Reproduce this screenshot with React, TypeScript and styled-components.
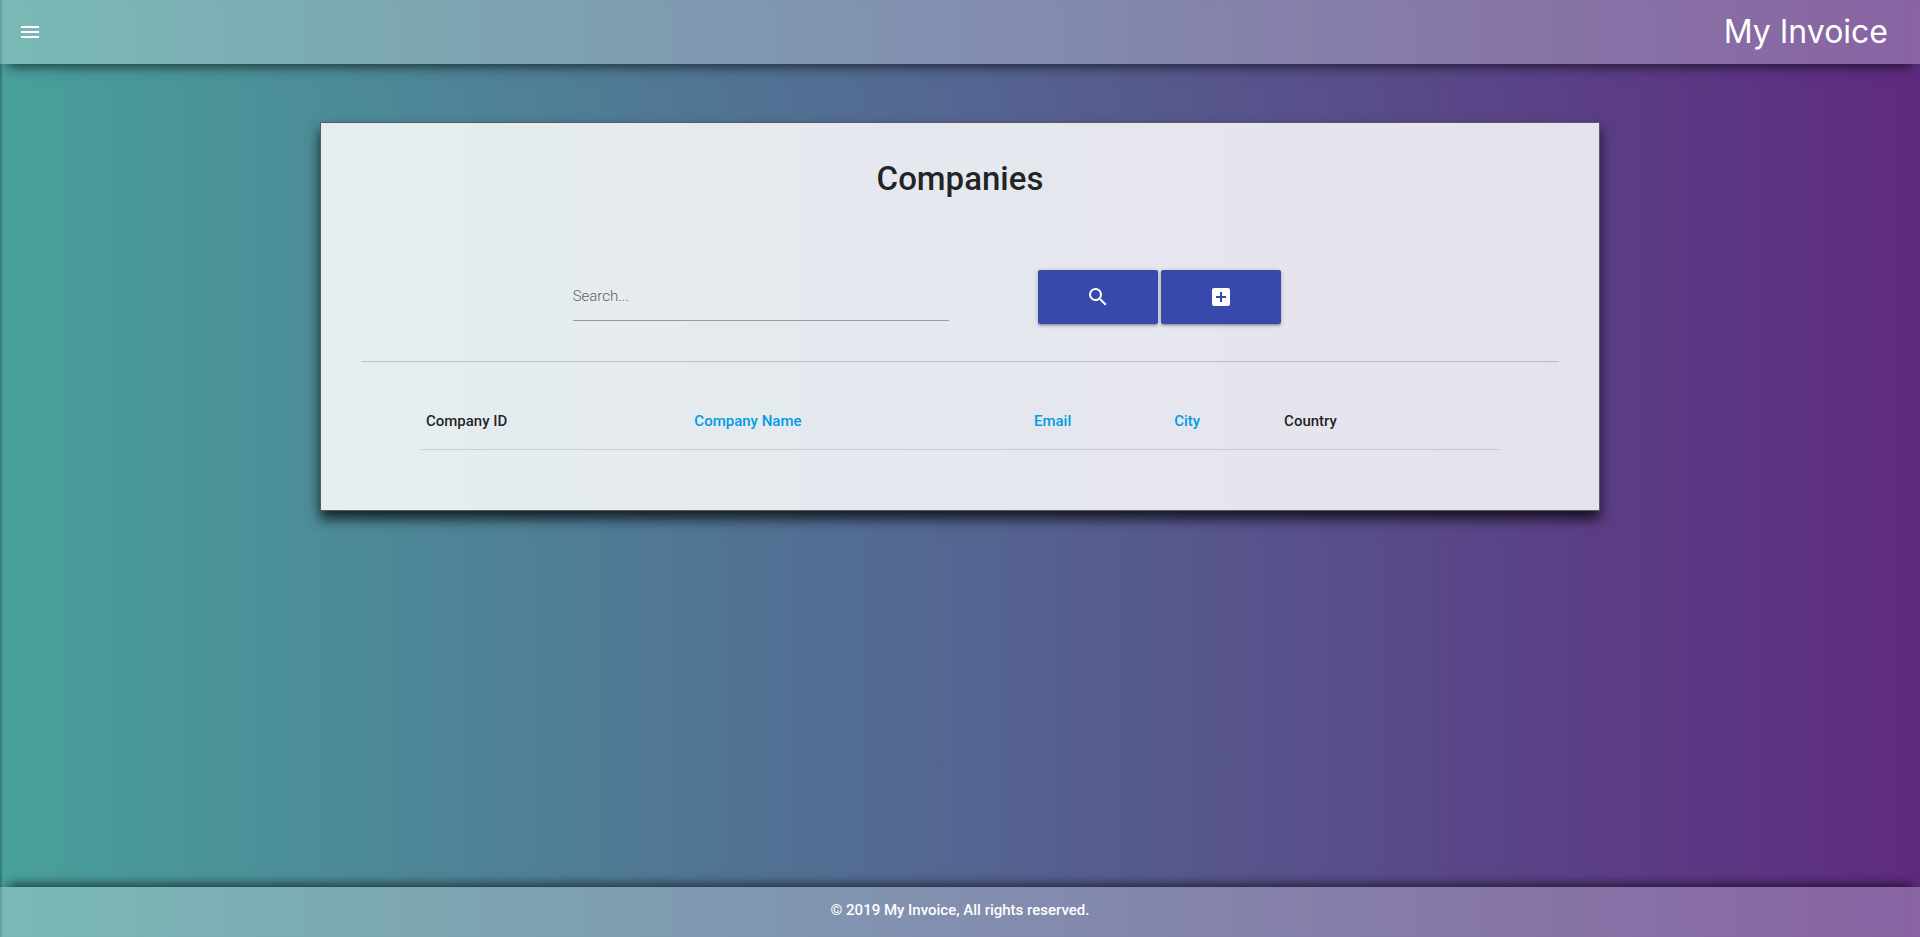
import React from 'react';
import styled, { createGlobalStyle } from 'styled-components';
import { MdAddBox, MdMenu, MdSearch } from 'react-icons/md';

const GlobalStyle = createGlobalStyle`
  *, *::before, *::after { box-sizing: border-box; }
  body {
    margin: 0;
    color: rgba(0, 0, 0, 0.87);
    font-family: Roboto, "Liberation Sans", sans-serif;
    font-size: 15px;
    line-height: 24px;
  }
`;

const Page = styled.div`
  display: flex;
  flex-direction: column;
  min-height: 100vh;
  background: linear-gradient(to right, #48a09b 0%, #546892 48%, #5e2a80 100%);
  box-shadow: inset 3px 0 3px -2px rgba(0, 0, 0, 0.4);
`;

const Header = styled.header`
  display: flex;
  align-items: center;
  justify-content: space-between;
  height: 64px;
  padding: 0 32px 0 18px;
  background: rgba(255, 255, 255, 0.27);
  box-shadow: 0 10px 12px -8px rgba(0, 0, 0, 0.7);
  color: #fff;
`;

const MenuButton = styled.button`
  display: flex;
  padding: 0;
  border: 0;
  background: none;
  color: inherit;
  font-size: 24px;
  cursor: pointer;
`;

const Brand = styled.a`
  color: inherit;
  font-family: Inter, sans-serif;
  font-size: 32px;
  font-weight: 400;
  line-height: 64px;
  text-decoration: none;
`;

const Main = styled.main`
  flex: 1;
  padding: 58px 0;
`;

const Card = styled.section`
  width: 66.667%;
  margin: 0 auto;
  padding: 32px 40px 60px;
  border: 1px solid #5a5a5a;
  background: rgba(255, 255, 255, 0.85);
  box-shadow: 0 8px 12px rgba(0, 0, 0, 0.75);
`;

const Title = styled.h1`
  margin: 0;
  font-size: 33px;
  font-weight: 500;
  line-height: 48px;
  text-align: center;
`;

const SearchRow = styled.form`
  display: grid;
  grid-template-columns: repeat(12, 1fr);
  align-items: center;
  padding: 67px 0 37px;
  border-bottom: 1px solid rgba(0, 0, 0, 0.18);
`;

const SearchField = styled.div`
  grid-column: 3 / span 4;
  padding: 0 11px 0 12px;
`;

const SearchInput = styled.input`
  display: block;
  width: 100%;
  height: 48px;
  padding: 0 0 2px;
  border: 0;
  border-bottom: 1px solid #9a9a9a;
  outline: 0;
  background: transparent;
  color: inherit;
  font: 300 15px Roboto, "Liberation Sans", sans-serif;

  &::placeholder {
    color: #616161;
    opacity: 1;
  }
`;

const Actions = styled.div`
  grid-column: 7 / span 4;
  display: flex;
  justify-content: center;
  gap: 3px;
`;

const ActionButton = styled.button`
  display: flex;
  align-items: center;
  justify-content: center;
  width: 120px;
  height: 54px;
  padding: 0;
  border: 0;
  border-radius: 2px;
  background: #3949ab;
  box-shadow: 0 2px 2px 0 rgba(0, 0, 0, 0.14), 0 3px 1px -2px rgba(0, 0, 0, 0.12),
    0 1px 5px 0 rgba(0, 0, 0, 0.2);
  color: #fff;
  font-size: 24px;
  cursor: pointer;
`;

const Table = styled.table`
  width: 90%;
  margin: 32px auto 0;
  border-collapse: collapse;
  table-layout: fixed;
`;

const HeadRow = styled.tr`
  border-bottom: 1px solid rgba(0, 0, 0, 0.12);
`;

const HeadCell = styled.th<{ $share: string }>`
  width: ${({ $share }) => $share};
  padding: 15px 5px 16px;
  font-weight: 500;
  text-align: left;
`;

const SortLink = styled.a`
  color: #039be5;
  text-decoration: none;
`;

const Footer = styled.footer`
  height: 50px;
  padding-top: 11px;
  background: rgba(255, 255, 255, 0.27);
  box-shadow: 0 -10px 12px -8px rgba(0, 0, 0, 0.7);
  color: #fff;
  font-weight: 500;
  text-align: center;
`;

const columns = [
  { label: 'Company ID', share: '24.9%', sortable: false },
  { label: 'Company Name', share: '31.5%', sortable: true },
  { label: 'Email', share: '13%', sortable: true },
  { label: 'City', share: '10.2%', sortable: true },
  { label: 'Country', share: '20.4%', sortable: false },
];

export default function App() {
  return (
    <Page>
      <GlobalStyle />
      <Header>
        <MenuButton type="button" aria-label="Open menu">
          <MdMenu />
        </MenuButton>
        <Brand href="#">My Invoice</Brand>
      </Header>
      <Main>
        <Card>
          <Title>Companies</Title>
          <SearchRow onSubmit={(event) => event.preventDefault()}>
            <SearchField>
              <SearchInput type="text" aria-label="Search companies" placeholder="Search..." />
            </SearchField>
            <Actions>
              <ActionButton type="submit" aria-label="Search">
                <MdSearch />
              </ActionButton>
              <ActionButton type="button" aria-label="Add company">
                <MdAddBox />
              </ActionButton>
            </Actions>
          </SearchRow>
          <Table>
            <thead>
              <HeadRow>
                {columns.map(({ label, share, sortable }) => (
                  <HeadCell key={label} scope="col" $share={share}>
                    {sortable ? <SortLink href="#">{label}</SortLink> : label}
                  </HeadCell>
                ))}
              </HeadRow>
            </thead>
          </Table>
        </Card>
      </Main>
      <Footer>© 2019 My Invoice, All rights reserved.</Footer>
    </Page>
  );
}
